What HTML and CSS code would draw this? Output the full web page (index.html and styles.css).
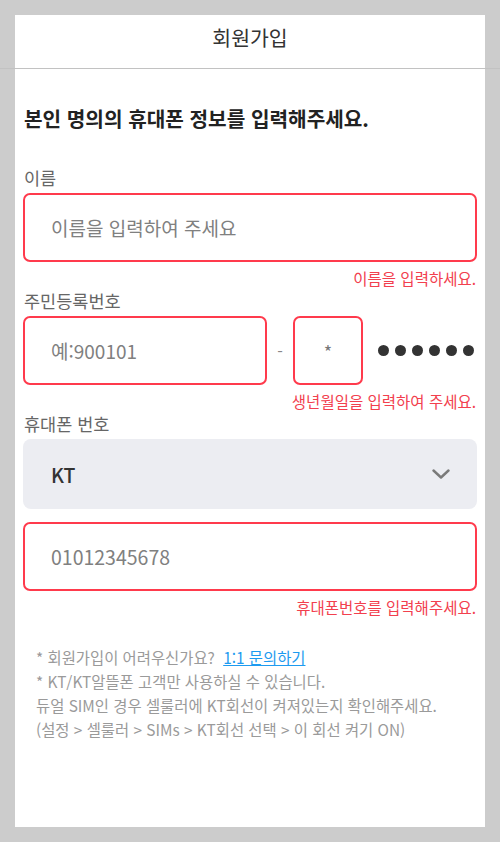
FILE: index.html
```html
<!DOCTYPE html>
<html lang="ko">
<head>
<meta charset="utf-8">
<title>회원가입</title>
<link rel="stylesheet" href="styles.css">
</head>
<body>
<div class="page">
  <header class="topbar">
    <h1 class="topbar-title">회원가입</h1>
  </header>
  <main class="content">
    <h2 class="intro">본인 명의의 휴대폰 정보를 입력해주세요.</h2>

    <label class="label">이름</label>
    <input class="field field-error" type="text" placeholder="이름을 입력하여 주세요">
    <p class="error">이름을 입력하세요.</p>

    <label class="label">주민등록번호</label>
    <div class="rrn-row">
      <input class="field field-error rrn-front" type="text" placeholder="예:900101">
      <span class="dash">-</span>
      <input class="field field-error rrn-back" type="text" placeholder="*">
      <div class="dots">
        <span class="dot"></span><span class="dot"></span><span class="dot"></span><span class="dot"></span><span class="dot"></span><span class="dot"></span>
      </div>
    </div>
    <p class="error">생년월일을 입력하여 주세요.</p>

    <label class="label">휴대폰 번호</label>
    <div class="select">
      <span class="select-value">KT</span>
      <svg class="chevron" width="18" height="10" viewBox="0 0 18 10"><path d="M1.5 1.5 L9 8.5 L16.5 1.5" fill="none" stroke="#7a7a7a" stroke-width="2.4" stroke-linecap="round" stroke-linejoin="round"/></svg>
    </div>
    <input class="field field-error phone" type="text" placeholder="01012345678">
    <p class="error">휴대폰번호를 입력해주세요.</p>

    <div class="notes">
      <p>* 회원가입이 어려우신가요? <a class="link" href="#">1:1 문의하기</a></p>
      <p>* KT/KT알뜰폰 고객만 사용하실 수 있습니다.</p>
      <p>듀얼 SIM인 경우 셀룰러에 KT회선이 켜져있는지 확인해주세요.</p>
      <p>(설정 &gt; 셀룰러 &gt; SIMs &gt; KT회선 선택 &gt; 이 회선 켜기 ON)</p>
    </div>
  </main>
</div>
</body>
</html>
```
FILE: styles.css
```css
* { box-sizing: border-box; }
html, body { margin: 0; padding: 0; }
body {
  background: #cccccc;
  padding: 15px;
  font-family: "Noto Sans CJK KR", "Noto Sans", sans-serif;
  color: #333;
}
.page {
  background: #ffffff;
  height: 812px;
}
.topbar {
  padding-top: 10px;
}
.topbar-title {
  margin: 0;
  font-size: 20.5px;
  font-weight: 400;
  line-height: 24px;
  text-align: center;
  color: #333;
}
.topbar::after {
  content: "";
  display: block;
  height: 1px;
  margin: 19px -15px 0;
  background: #c2c2c2;
}
.content {
  padding: 36px 8px 0;
}
.intro {
  margin: 0 0 33px 1px;
  font-size: 20.2px;
  font-weight: 700;
  line-height: 28px;
  color: #222;
}
.label {
  display: block;
  margin: 0 0 3px 1px;
  font-size: 17.5px;
  line-height: 24px;
  color: #666;
}
.field {
  display: block;
  width: 100%;
  height: 69px;
  margin: 0;
  padding: 0 0 0 26px;
  border: 2px solid #ff3a4c;
  border-radius: 7px;
  background: #fff;
  font-family: inherit;
  font-size: 19px;
  color: #333;
  outline: none;
}
.field::placeholder { color: #808080; }
.error {
  margin: 0;
  padding: 6px 1px 1px 0;
  font-size: 15.5px;
  line-height: 20px;
  text-align: right;
  color: #f2404e;
}
.rrn-row {
  display: flex;
  align-items: center;
}
.rrn-front {
  width: 244px;
  flex: none;
}
.dash {
  width: 26px;
  text-align: center;
  font-size: 16px;
  color: #888;
}
.rrn-back {
  width: 70px;
  flex: none;
  padding: 0;
  text-align: center;
  font-size: 18px;
}
.rrn-back::placeholder { color: #777; }
.dots {
  display: flex;
  gap: 6px;
  margin-left: 15px;
}
.dot {
  width: 11px;
  height: 11px;
  border-radius: 50%;
  background: #333;
}
.select {
  display: flex;
  align-items: center;
  justify-content: space-between;
  height: 70px;
  padding: 0 27px 0 28px;
  border-radius: 8px;
  background: #ecedf2;
}
.select-value {
  font-size: 19.5px;
  font-weight: 500;
  color: #333;
}
.phone {
  margin-top: 13px;
  font-size: 19.5px;
}
.notes {
  margin-top: 27px;
  padding-left: 13px;
  font-size: 15.4px;
  line-height: 24px;
  color: #9a9a9a;
}
.notes p { margin: 0; }
.link {
  color: #1d9bf0;
  text-decoration: underline;
  margin-left: 4px;
}
```
